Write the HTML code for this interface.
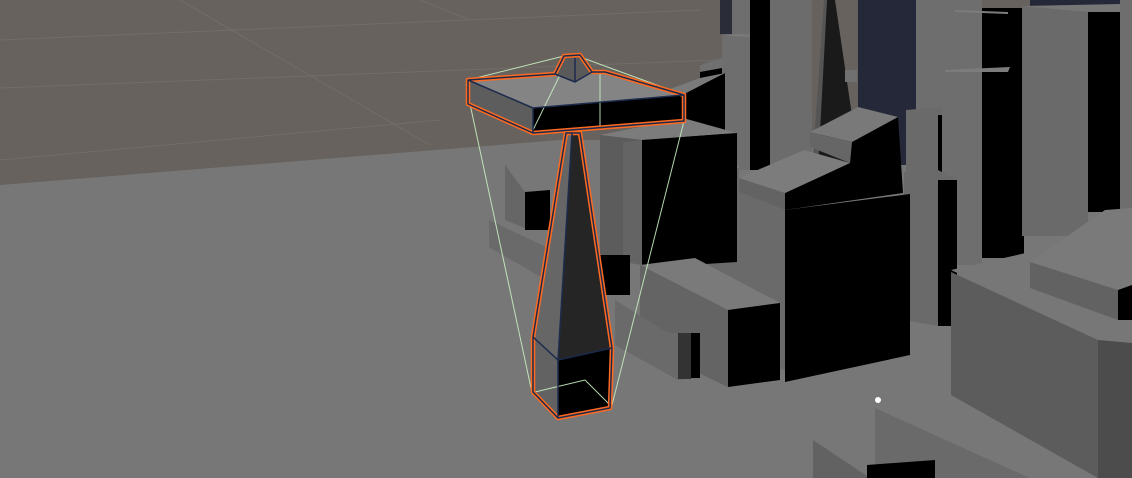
<!DOCTYPE html>
<html><head><style>html,body{margin:0;padding:0;background:#777}svg{display:block}</style></head>
<body>
<svg width="1132" height="478" viewBox="0 0 1132 478" xmlns="http://www.w3.org/2000/svg">
<rect width="1132" height="478" fill="#777777"/>
<polygon points="0,0 1132,0 1132,140 560,140 0,185" fill="#67625e"/>
<g stroke="#75706b" stroke-width="1" fill="none" opacity="0.8">
<line x1="0" y1="40" x2="700" y2="10"/><line x1="0" y1="88" x2="720" y2="60"/>
<line x1="180" y1="0" x2="430" y2="145"/><line x1="420" y1="0" x2="470" y2="20"/>
<line x1="0" y1="160" x2="440" y2="120"/>
</g>
<rect x="858" y="0" width="58" height="165" fill="#252838"/>
<rect x="1030" y="0" width="92" height="8" fill="#252838"/>
<!-- far towers -->
<polygon points="700,65 722,60 722,180 700,180" fill="#000"/>
<polygon points="700,65 722,58 722,68 700,72" fill="#707070"/>
<rect x="720" y="0" width="12" height="34" fill="#2a2c38"/>
<rect x="732" y="0" width="18" height="170" fill="#6e6e6e"/>
<polygon points="722,35 740,34 740,170 722,170" fill="#6e6e6e"/>
<polygon points="722,35 740,34 765,36 745,37" fill="#7a7a7a"/>
<rect x="750" y="0" width="20" height="170" fill="#000"/>
<rect x="770" y="0" width="42" height="170" fill="#6c6c6c"/>
<polygon points="812,170 827,0 835,0 860,170" fill="#1a1a1a"/>
<polygon points="812,170 824,0 827,0 818,170" fill="#555"/>
<rect x="845" y="70" width="12" height="12" fill="#707070"/>
<rect x="916" y="0" width="66" height="265" fill="#6e6e6e"/>
<rect x="982" y="8" width="42" height="250" fill="#000"/>
<polygon points="945,70 1010,67 1008,72 945,72" fill="#7c7c7c"/>
<polygon points="955,10 1008,12 1008,14 955,12" fill="#7c7c7c"/>
<rect x="1022" y="6" width="66" height="230" fill="#6a6a6a"/>
<polygon points="1022,6 1120,4 1120,12 1088,12" fill="#767676"/>
<rect x="1088" y="12" width="32" height="200" fill="#000"/>
<rect x="1120" y="0" width="12" height="210" fill="#6e6e6e"/>
<polygon points="906,110 942,107 942,175 906,175" fill="#6a6a6a"/>
<rect x="938" y="115" width="4" height="60" fill="#000"/>
<polygon points="904,172 938,170 957,180 957,326 938,326 904,320" fill="#6a6a6a"/>
<rect x="938" y="180" width="19" height="146" fill="#000"/>
<!-- big middle block -->
<polygon points="693,172 739,166 739,192 785,210 693,185" fill="#7a7a7a"/>
<polygon points="785,193 850,163 852,142 898,117 903,193 785,210" fill="#000"/>
<polygon points="810,132 858,107 898,117 852,142" fill="#797979"/>
<polygon points="810,132 852,142 850,163 810,147" fill="#666"/>
<polygon points="739,178 804,150 850,163 785,193" fill="#7c7c7c"/>
<polygon points="739,178 785,193 785,210 739,192" fill="#636363"/>
<polygon points="693,172 739,168 739,192 785,210 785,370 693,345" fill="#6a6a6a"/>
<polygon points="785,210 910,194 910,355 785,382" fill="#000"/>
<!-- blocks behind tower -->
<polygon points="686,93 725,73 725,135 686,140" fill="#000"/>
<polygon points="640,100 700,78 725,73 686,93" fill="#7a7a7a"/>
<polygon points="600,135 683,118 737,133 642,140" fill="#7c7c7c"/>
<polygon points="600,135 642,140 642,265 600,255" fill="#5c5c5c"/>
<polygon points="623,142 642,140 642,265 623,262" fill="#646464"/>
<polygon points="642,140 737,133 737,262 642,268" fill="#000"/>
<polygon points="505,165 525,192 525,228 505,220" fill="#666"/>
<polygon points="525,192 550,190 550,230 525,230" fill="#000"/>
<polygon points="489,220 546,247 546,280 489,247" fill="#6a6a6a"/>
<polygon points="546,247 580,245 630,270 600,300 546,280" fill="#6e6e6e"/>
<rect x="600" y="255" width="30" height="40" fill="#000"/>
<polygon points="640,265 695,258 780,303 728,310" fill="#7a7a7a"/>
<polygon points="640,265 728,310 728,387 640,345" fill="#646464"/>
<polygon points="728,310 780,303 780,380 728,387" fill="#000"/>
<polygon points="615,300 668,333 700,333 700,378 678,380 615,345" fill="#6a6a6a"/>
<rect x="678" y="333" width="13" height="46" fill="#333"/>
<rect x="691" y="333" width="9" height="45" fill="#000"/>
<!-- lower right block -->
<polygon points="951,270 1030,252 1132,300 1132,343 1098,340" fill="#777"/>
<polygon points="1030,262 1105,210 1132,208 1132,285 1118,290" fill="#7a7a7a"/>
<polygon points="1030,262 1118,290 1118,320 1030,288" fill="#626262"/>
<polygon points="1118,290 1132,285 1132,320 1118,320" fill="#000"/>
<polygon points="951,272 1098,340 1098,478 951,395" fill="#5c5c5c"/>
<polygon points="1098,340 1132,343 1132,478 1098,478" fill="#4c4c4c"/>
<polygon points="875,408 1030,478 875,478" fill="#6a6a6a"/>
<polygon points="875,408 878,398 960,440 1030,478" fill="#777"/>
<polygon points="813,440 870,478 813,478" fill="#626262"/>
<polygon points="867,465 935,460 935,478 867,478" fill="#000"/>
<circle cx="878" cy="400" r="3" fill="#fff"/>
<!-- TOWER -->
<g stroke-linejoin="round">
<polygon points="468,80 555,74 600,72 684,95 533,108" fill="#848484"/>
<polygon points="555,75 564,56 580,55 592,72 575,82" fill="#5a5a5a"/>
<polygon points="468,80 533,108 533,133 468,104" fill="#5d5d5d"/>
<polygon points="533,108 684,95 684,121 533,133" fill="#000"/>
<polygon points="566,133 572,133 558,360 533,337" fill="#666"/>
<polygon points="572,133 580,133 612,348 558,360" fill="#252525"/>
<polygon points="533,337 558,360 558,418 533,392" fill="#626262"/>
<polygon points="558,360 612,348 610,408 558,418" fill="#000"/>
<g stroke="#c8eec0" stroke-width="1" fill="none" opacity="0.9">
<line x1="470" y1="104" x2="531" y2="388"/><line x1="684" y1="121" x2="612" y2="405"/>
<line x1="468" y1="80" x2="572" y2="54"/><line x1="572" y1="54" x2="684" y2="95"/>
<line x1="600" y1="73" x2="600" y2="130"/><line x1="533" y1="130" x2="560" y2="75"/>
<line x1="535" y1="392" x2="585" y2="380"/><line x1="585" y1="380" x2="610" y2="405"/>
</g>
<g stroke="#ff6a20" stroke-width="4.5" fill="none">
<polygon points="468,80 555,74 564,56 580,55 592,72 605,72 684,95 684,121 533,133 468,104"/>
<polygon points="566,133 533,337 533,392 558,418 610,408 612,348 580,133"/>
</g>
<g stroke="#1c2a4c" stroke-width="1.5" fill="none">
<polygon points="468,80 555,74 564,56 580,55 592,72 605,72 684,95 684,121 533,133 468,104"/>
<polygon points="566,133 533,337 533,392 558,418 610,408 612,348 580,133"/>
<polyline points="468,80 533,108 684,95"/><line x1="533" y1="108" x2="533" y2="133"/>
<polyline points="555,74 575,82 592,72"/><line x1="575" y1="58" x2="575" y2="82"/>
<line x1="572" y1="133" x2="558" y2="360"/>
<polyline points="533,337 558,360 612,348"/><line x1="558" y1="360" x2="558" y2="418"/>
</g>
</g>
</svg>
</body></html>
